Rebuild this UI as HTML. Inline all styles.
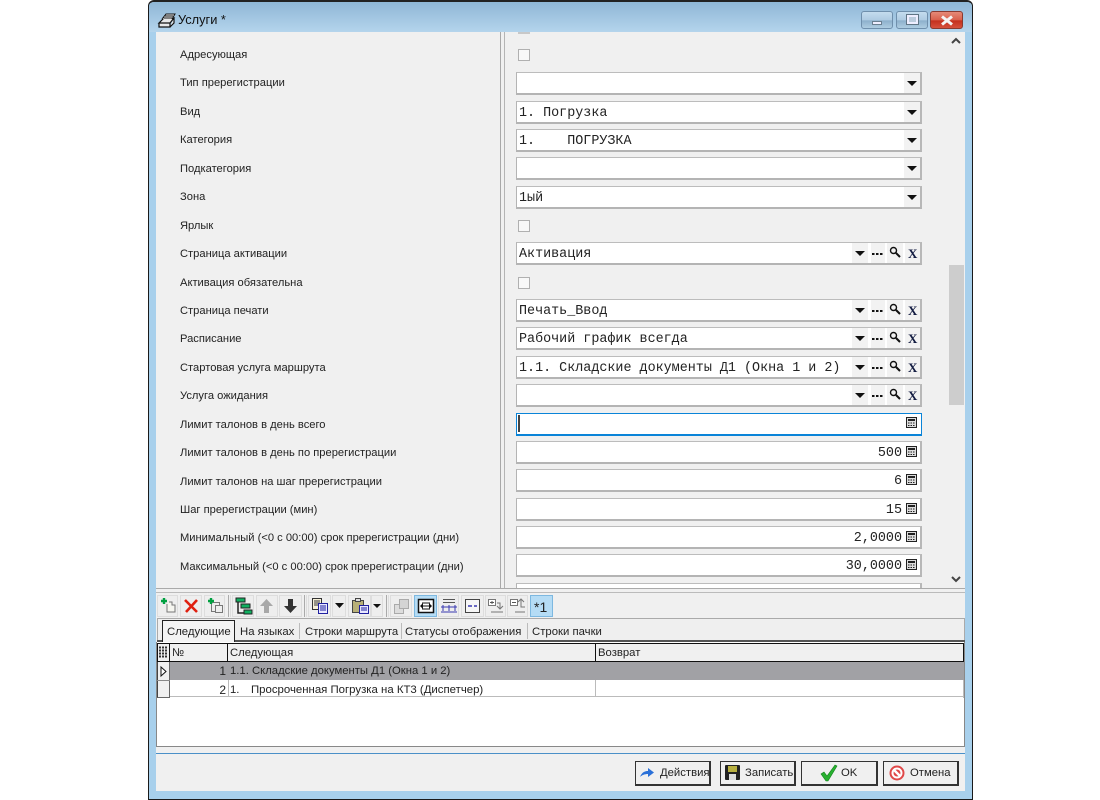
<!DOCTYPE html>
<html><head><meta charset="utf-8">
<style>
html,body{margin:0;padding:0;background:#fff;width:1100px;height:800px;overflow:hidden}
*{box-sizing:border-box}
body{font-family:"Liberation Sans",sans-serif;font-size:11.3px;color:#222;position:relative}
.a{position:absolute}
.l{position:absolute;left:180px;white-space:nowrap;line-height:14px;height:14px;font-size:11.16px;color:#222;margin-top:1px}
.f{position:absolute;left:516px;width:406px;height:23px;background:#fff;border:2px solid #b4b4b4;border-width:1px 2px 2px 1px;border-color:#bcbcbc #b8b8b8 #b4b4b4 #b4b4b4;font-family:"Liberation Mono",monospace;font-size:13.4px;line-height:23px;padding-left:2px;white-space:pre;color:#222}
.f.r{text-align:right;padding:0 18px 0 0}
.c{position:absolute;left:518px;width:12px;height:12px;background:#f8f8f8;border:1px solid #b0b0b0}
.dd{position:absolute;width:16px;height:20px;background:#f2f2f2;top:0}
.dd:after{content:"";position:absolute;left:3px;top:8px;border:5px solid transparent;border-top:5px solid #111;border-bottom:0}
.b{position:absolute;top:595px;height:22px;background:#eee;border:1px solid #ddd}
.on{background:#b5dcf5;border:1px solid #7db8e0}
.sep{position:absolute;top:595px;width:3px;height:22px;border-left:1px solid #aaa;border-right:1px solid #ddd}
.t{position:absolute;top:625px;line-height:14px;white-space:nowrap;font-size:11.35px;color:#222}
.ts{position:absolute;top:623px;width:1px;height:16px;background:#bbb}
.h{position:absolute;top:643px;height:19px;background:#f0f0f0;border:1px solid #111;border-left:0;line-height:18px;padding-left:2px;font-size:11.3px}
.btn{position:absolute;top:761px;height:25px;background:#f0f0f0;border:2px solid #333;border-width:1px 2px 2px 1px;font-size:11.3px;line-height:22px;white-space:nowrap}
.x1,.x2,.x3{position:absolute;height:20px;background:#f2f2f2}
.x1{left:871px;width:14px}.x2{left:887px;width:16px}.x3{left:905px;width:15px}
.xl{position:absolute;left:908px;font:bold 13px/14px "Liberation Serif",serif;color:#111a40}
svg{position:absolute;overflow:visible}
</style></head><body>
<!-- window frame -->
<div class="a" style="left:148px;top:0;width:825px;height:800px;background:#a8d0ec;border:1px solid #1a1a1a;border-top:2px solid #222;border-radius:6px 6px 0 0"></div>
<div class="a" style="left:149px;top:2px;width:823px;height:30px;background:linear-gradient(#8fb7d6,#b4d4ec);border-radius:5px 5px 0 0"></div>
<div class="a" style="left:156px;top:32px;width:809px;height:759px;background:#f0f0f0"></div>
<!-- title -->
<svg style="left:158px;top:11px" width="18" height="18" viewBox="0 0 18 18"><path d="M1 12 L6 7 L16 7 L12 12 Z M1 12 V16 H12 V12 M12 16 L16 12 V7" fill="#e8e8e8" stroke="#111" stroke-width="1.2"/><path d="M4 8 L8 3 L17 3 L14 8 M7 5 H15 M5.5 7 H14" fill="#eee" stroke="#111"/></svg>
<div class="a" style="left:178px;top:13px;font-size:12.8px;line-height:14px;color:#111">Услуги *</div>
<!-- caption buttons -->
<div class="a" style="left:861px;top:11px;width:32px;height:18px;border:1px solid #6f8fac;border-radius:3px;background:linear-gradient(#c4dcee 0,#aecbe2 50%,#8db0cc 55%,#aecde2)"><div class="a" style="left:10px;top:9px;width:10px;height:4px;background:#eef;border:1px solid #6a7f90"></div></div>
<div class="a" style="left:896px;top:11px;width:32px;height:18px;border:1px solid #6f8fac;border-radius:3px;background:linear-gradient(#c4dcee 0,#aecbe2 50%,#8db0cc 55%,#aecde2)"><div class="a" style="left:10px;top:3px;width:11px;height:9px;background:#bcd;border:2px solid #eef;outline:1px solid #607585"></div></div>
<div class="a" style="left:930px;top:11px;width:33px;height:18px;border:1px solid #8a3a30;border-radius:3px;background:linear-gradient(#e58a78 0,#d9604c 50%,#c4301e 55%,#d6503c)"><svg style="left:9px;top:3px" width="14" height="11" viewBox="0 0 14 11"><path d="M2 1.5 L12 9.5 M12 1.5 L2 9.5" stroke="#f4f4f4" stroke-width="3"/></svg></div>
<!-- splitter -->
<div class="a" style="left:500px;top:32px;width:1px;height:556px;background:#a8a8a8"></div>
<div class="a" style="left:504px;top:32px;width:1px;height:556px;background:#b4b4b4"></div>
<!-- scrollbar -->
<svg style="left:951px;top:37px" width="10" height="8" viewBox="0 0 10 8"><path d="M1 6 L5 2 L9 6" fill="none" stroke="#444" stroke-width="2"/></svg>
<div class="a" style="left:949px;top:265px;width:15px;height:140px;background:#cdcdcd"></div>
<svg style="left:951px;top:575px" width="10" height="8" viewBox="0 0 10 8"><path d="M1 2 L5 6 L9 2" fill="none" stroke="#444" stroke-width="2"/></svg>
<!-- labels -->
<div class="l" style="top:47px">Адресующая</div>
<div class="l" style="top:75px">Тип пререгистрации</div>
<div class="l" style="top:104px">Вид</div>
<div class="l" style="top:132px">Категория</div>
<div class="l" style="top:161px">Подкатегория</div>
<div class="l" style="top:189px">Зона</div>
<div class="l" style="top:218px">Ярлык</div>
<div class="l" style="top:246px">Страница активации</div>
<div class="l" style="top:275px">Активация обязательна</div>
<div class="l" style="top:303px">Страница печати</div>
<div class="l" style="top:331px">Расписание</div>
<div class="l" style="top:360px">Стартовая услуга маршрута</div>
<div class="l" style="top:388px">Услуга ожидания</div>
<div class="l" style="top:417px">Лимит талонов в день всего</div>
<div class="l" style="top:445px">Лимит талонов в день по пререгистрации</div>
<div class="l" style="top:474px">Лимит талонов на шаг пререгистрации</div>
<div class="l" style="top:502px">Шаг пререгистрации (мин)</div>
<div class="l" style="top:530px">Минимальный (&lt;0 с 00:00) срок пререгистрации (дни)</div>
<div class="l" style="top:559px">Максимальный (&lt;0 с 00:00) срок пререгистрации (дни)</div>
<!-- checks -->
<div class="a" style="left:518px;top:32px;width:12px;height:2px;background:#c8c8c8"></div>
<div class="c" style="top:49px"></div>
<div class="c" style="top:220px"></div>
<div class="c" style="top:277px"></div>
<!-- combo fields -->
<div class="f" style="top:72px"><span class="dd" style="right:0"></span></div>
<div class="f" style="top:101px">1. Погрузка<span class="dd" style="right:0"></span></div>
<div class="f" style="top:129px">1.    ПОГРУЗКА<span class="dd" style="right:0"></span></div>
<div class="f" style="top:157px"><span class="dd" style="right:0"></span></div>
<div class="f" style="top:186px">1ый<span class="dd" style="right:0"></span></div>
<!-- lookup fields -->
<div class="f" style="top:242px">Активация<span class="dd" style="right:52px"></span></div>
<div class="f" style="top:299px">Печать_Ввод<span class="dd" style="right:52px"></span></div>
<div class="f" style="top:327px">Рабочий график всегда<span class="dd" style="right:52px"></span></div>
<div class="f" style="top:356px">1.1. Складские документы Д1 (Окна 1 и 2)<span class="dd" style="right:52px"></span></div>
<div class="f" style="top:384px"><span class="dd" style="right:52px"></span></div>
<!-- lookup icons: dots, magnifier, X -->
<div class="x1" style="top:243px"></div><div class="x2" style="top:243px"></div><div class="x3" style="top:243px"></div>
<svg style="left:872px;top:253px" width="11" height="3"><path d="M0 1 H2.5 M4 1 H6.5 M8 1 H10.5" stroke="#111" stroke-width="2"/></svg>
<svg style="left:889px;top:246px" width="12" height="12" viewBox="0 0 12 12"><circle cx="4.5" cy="4.5" r="3" fill="none" stroke="#111" stroke-width="1.4"/><path d="M7 7 L11 11" stroke="#111" stroke-width="2"/></svg>
<div class="xl" style="top:247px">X</div>
<div class="x1" style="top:300px"></div><div class="x2" style="top:300px"></div><div class="x3" style="top:300px"></div>
<svg style="left:872px;top:310px" width="11" height="3"><path d="M0 1 H2.5 M4 1 H6.5 M8 1 H10.5" stroke="#111" stroke-width="2"/></svg>
<svg style="left:889px;top:303px" width="12" height="12" viewBox="0 0 12 12"><circle cx="4.5" cy="4.5" r="3" fill="none" stroke="#111" stroke-width="1.4"/><path d="M7 7 L11 11" stroke="#111" stroke-width="2"/></svg>
<div class="xl" style="top:304px">X</div>
<div class="x1" style="top:328px"></div><div class="x2" style="top:328px"></div><div class="x3" style="top:328px"></div>
<svg style="left:872px;top:338px" width="11" height="3"><path d="M0 1 H2.5 M4 1 H6.5 M8 1 H10.5" stroke="#111" stroke-width="2"/></svg>
<svg style="left:889px;top:331px" width="12" height="12" viewBox="0 0 12 12"><circle cx="4.5" cy="4.5" r="3" fill="none" stroke="#111" stroke-width="1.4"/><path d="M7 7 L11 11" stroke="#111" stroke-width="2"/></svg>
<div class="xl" style="top:332px">X</div>
<div class="x1" style="top:357px"></div><div class="x2" style="top:357px"></div><div class="x3" style="top:357px"></div>
<svg style="left:872px;top:367px" width="11" height="3"><path d="M0 1 H2.5 M4 1 H6.5 M8 1 H10.5" stroke="#111" stroke-width="2"/></svg>
<svg style="left:889px;top:360px" width="12" height="12" viewBox="0 0 12 12"><circle cx="4.5" cy="4.5" r="3" fill="none" stroke="#111" stroke-width="1.4"/><path d="M7 7 L11 11" stroke="#111" stroke-width="2"/></svg>
<div class="xl" style="top:361px">X</div>
<div class="x1" style="top:385px"></div><div class="x2" style="top:385px"></div><div class="x3" style="top:385px"></div>
<svg style="left:872px;top:395px" width="11" height="3"><path d="M0 1 H2.5 M4 1 H6.5 M8 1 H10.5" stroke="#111" stroke-width="2"/></svg>
<svg style="left:889px;top:388px" width="12" height="12" viewBox="0 0 12 12"><circle cx="4.5" cy="4.5" r="3" fill="none" stroke="#111" stroke-width="1.4"/><path d="M7 7 L11 11" stroke="#111" stroke-width="2"/></svg>
<div class="xl" style="top:389px">X</div>
<!-- numeric fields -->
<div class="f r" style="top:413px;border:1px solid #0a84d8;border-bottom-width:2px"></div>
<div class="a" style="left:518px;top:415px;width:2px;height:17px;background:#444"></div>
<div class="f r" style="top:441px">500</div>
<div class="f r" style="top:469px">6</div>
<div class="f r" style="top:498px">15</div>
<div class="f r" style="top:526px">2,0000</div>
<div class="f r" style="top:554px">30,0000</div>
<div class="f" style="top:583px;height:6px;border-bottom:0"></div>
<!-- calculators -->
<svg style="left:906px;top:417px" width="12" height="12" viewBox="0 0 12 12"><rect x=".5" y=".5" width="10" height="10" fill="#ddd" stroke="#222"/><path d="M2 3 H9" stroke="#222" stroke-width="2"/><path d="M2 6 H9 M2 8.5 H9" stroke="#222" stroke-dasharray="1.5 1"/></svg>
<svg style="left:906px;top:446px" width="12" height="12" viewBox="0 0 12 12"><rect x=".5" y=".5" width="10" height="10" fill="#ddd" stroke="#222"/><path d="M2 3 H9" stroke="#222" stroke-width="2"/><path d="M2 6 H9 M2 8.5 H9" stroke="#222" stroke-dasharray="1.5 1"/></svg>
<svg style="left:906px;top:474px" width="12" height="12" viewBox="0 0 12 12"><rect x=".5" y=".5" width="10" height="10" fill="#ddd" stroke="#222"/><path d="M2 3 H9" stroke="#222" stroke-width="2"/><path d="M2 6 H9 M2 8.5 H9" stroke="#222" stroke-dasharray="1.5 1"/></svg>
<svg style="left:906px;top:503px" width="12" height="12" viewBox="0 0 12 12"><rect x=".5" y=".5" width="10" height="10" fill="#ddd" stroke="#222"/><path d="M2 3 H9" stroke="#222" stroke-width="2"/><path d="M2 6 H9 M2 8.5 H9" stroke="#222" stroke-dasharray="1.5 1"/></svg>
<svg style="left:906px;top:531px" width="12" height="12" viewBox="0 0 12 12"><rect x=".5" y=".5" width="10" height="10" fill="#ddd" stroke="#222"/><path d="M2 3 H9" stroke="#222" stroke-width="2"/><path d="M2 6 H9 M2 8.5 H9" stroke="#222" stroke-dasharray="1.5 1"/></svg>
<svg style="left:906px;top:559px" width="12" height="12" viewBox="0 0 12 12"><rect x=".5" y=".5" width="10" height="10" fill="#ddd" stroke="#222"/><path d="M2 3 H9" stroke="#222" stroke-width="2"/><path d="M2 6 H9 M2 8.5 H9" stroke="#222" stroke-dasharray="1.5 1"/></svg>
<!-- horizontal splitter -->
<div class="a" style="left:156px;top:588px;width:809px;height:1px;background:#aaa"></div>
<div class="a" style="left:156px;top:592px;width:809px;height:1px;background:#bbb"></div>
<!-- toolbar -->
<div class="b" style="left:157px;width:21px"></div>
<div class="b" style="left:180px;width:22px"></div>
<div class="b" style="left:204px;width:21px"></div>
<div class="sep" style="left:228px"></div>
<div class="b" style="left:232px;width:22px"></div>
<div class="b" style="left:256px;width:22px"></div>
<div class="b" style="left:279px;width:23px"></div>
<div class="sep" style="left:304px"></div>
<div class="b" style="left:308px;width:23px"></div>
<div class="b" style="left:332px;width:14px"></div>
<div class="b" style="left:348px;width:23px"></div>
<div class="b" style="left:371px;width:12px"></div>
<div class="sep" style="left:386px"></div>
<div class="b" style="left:390px;width:22px"></div>
<div class="b on" style="left:414px;width:23px"></div>
<div class="b" style="left:438px;width:21px"></div>
<div class="b" style="left:461px;width:23px"></div>
<div class="b" style="left:485px;width:21px"></div>
<div class="b" style="left:507px;width:21px"></div>
<div class="b on" style="left:530px;width:23px"></div>
<!-- toolbar icons -->
<svg style="left:160px;top:597px" width="18" height="18" viewBox="0 0 18 18"><path d="M7 7 V15 H15 V8 H12 V5 H9" fill="#f6f6f0" stroke="#777"/><path d="M1 4 H7 M4 1 V7" stroke="#00a040" stroke-width="2.4"/></svg>
<svg style="left:183px;top:597px" width="17" height="18" viewBox="0 0 17 18"><path d="M2 3 L14 15 M14 3 L3 15" stroke="#e02010" stroke-width="2.6"/></svg>
<svg style="left:207px;top:597px" width="17" height="18" viewBox="0 0 17 18"><rect x="4.500" y="5.500" width="8" height="9" fill="#eee" stroke="#777"/><rect x="8.500" y="8.500" width="7" height="7" fill="#eee" stroke="#777"/><path d="M1 4 H7 M4 1 V7" stroke="#00a040" stroke-width="2.400"/></svg>
<svg style="left:235px;top:597px" width="18" height="18" viewBox="0 0 18 18"><path d="M3 3 V16 H14" fill="none" stroke="#222" stroke-width="1.500"/><rect x="1" y="1" width="9" height="4" fill="#10b060" stroke="#222"/><rect x="6" y="7" width="9" height="4" fill="#10b060" stroke="#222"/><rect x="9" y="13" width="8" height="4" fill="#10b060" stroke="#222"/></svg>
<svg style="left:258px;top:598px" width="17" height="16" viewBox="0 0 17 16"><path d="M8.500 1 L15 8 H11 V15 H6 V8 H2 Z" fill="#a8a8a8"/></svg>
<svg style="left:282px;top:598px" width="17" height="16" viewBox="0 0 17 16"><path d="M8.500 15 L15 8 H11 V1 H6 V8 H2 Z" fill="#333"/></svg>
<svg style="left:311px;top:597px" width="18" height="18" viewBox="0 0 18 18"><rect x="1.500" y="1.500" width="9" height="11" fill="#f6f0d8" stroke="#333"/><path d="M3 4 H9 M3 6 H9 M3 8 H9" stroke="#333"/><rect x="7.500" y="6.500" width="9" height="10" fill="#e8e8ff" stroke="#2020a0"/><path d="M9 9 H15 M9 11 H15 M9 13 H15" stroke="#2020a0"/></svg>
<svg style="left:335px;top:603px" width="9" height="6"><path d="M0 0 H9 L4.500 5 Z" fill="#111"/></svg>
<svg style="left:351px;top:597px" width="19" height="18" viewBox="0 0 19 18"><rect x="1.500" y="3.500" width="11" height="12" fill="#b8b078" stroke="#444"/><rect x="4.500" y="1.500" width="5" height="3" fill="#ddd" stroke="#444"/><rect x="8.500" y="8.500" width="9" height="8" fill="#e8e8ff" stroke="#2020a0"/><path d="M10 11 H16 M10 13 H16" stroke="#2020a0"/></svg>
<svg style="left:373px;top:604px" width="8" height="5"><path d="M0 0 H8 L4 4 Z" fill="#111"/></svg>
<svg style="left:393px;top:598px" width="17" height="17" viewBox="0 0 17 17"><rect x="1.500" y="6.500" width="9" height="9" fill="#ddd" stroke="#aaa"/><rect x="6.500" y="1.500" width="9" height="9" fill="#d4d4d4" stroke="#aaa"/></svg>
<svg style="left:417px;top:598px" width="18" height="16" viewBox="0 0 18 16"><rect x="1.500" y="1.500" width="15" height="13" fill="#fff" stroke="#111" stroke-width="1.500"/><path d="M5 5 H13 M5 8 H13 M5 11 H13" stroke="#111"/><path d="M3 8 L6 5 V11 Z M15 8 L12 5 V11 Z" fill="#111"/></svg>
<svg style="left:440px;top:598px" width="18" height="16" viewBox="0 0 18 16"><path d="M3 1.500 H15 M3 4.500 H15" stroke="#555"/><path d="M1 9 H17 M1 14 H17" stroke="#3838b0"/><path d="M3 7 V13 M9 7 V13 M15 7 V13" stroke="#3838b0"/></svg>
<svg style="left:464px;top:598px" width="17" height="16" viewBox="0 0 17 16"><rect x="1.500" y="1.500" width="14" height="13" fill="#f6f6f6" stroke="#444"/><path d="M4 8 H8 M10 8 H13" stroke="#3838b0" stroke-width="1.500"/></svg>
<svg style="left:487px;top:598px" width="18" height="16" viewBox="0 0 18 16"><rect x="1.500" y="1.500" width="7" height="6" fill="#fff" stroke="#777"/><path d="M3 4.500 H7 M5 3 V6" stroke="#555"/><path d="M10 5 H13 V11 M10 8 L13 11 L16 8 M4 14 H16" fill="none" stroke="#777"/></svg>
<svg style="left:509px;top:598px" width="18" height="16" viewBox="0 0 18 16"><rect x="1.500" y="1.500" width="7" height="6" fill="#fff" stroke="#777"/><path d="M3 4.500 H7" stroke="#555"/><path d="M9 4 L12 1 L15 4 M12 1 V9 H16 M6 14 H16" fill="none" stroke="#777"/></svg>
<div class="a" style="left:534px;top:599px;font-size:14px;line-height:16px;color:#222">*1</div>
<!-- tabs -->
<div class="a" style="left:157px;top:618px;width:808px;height:23px;border:1px solid #aaa;border-bottom:0;background:#efefef"></div>
<div class="a" style="left:157px;top:640px;width:808px;height:2px;background:#555"></div>
<div class="a" style="left:162px;top:620px;width:73px;height:22px;background:#f4f4f4;border:1px solid #222;border-bottom:0"></div>
<div class="t" style="left:167px">Следующие</div>
<div class="t" style="left:240px">На языках</div>
<div class="ts" style="left:299px"></div>
<div class="t" style="left:305px">Строки маршрута</div>
<div class="ts" style="left:401px"></div>
<div class="t" style="left:405px">Статусы отображения</div>
<div class="ts" style="left:527px"></div>
<div class="t" style="left:532px">Строки пачки</div>
<!-- grid -->
<div class="a" style="left:156px;top:642px;width:809px;height:105px;background:#fff;border:1px solid #888;border-top:0"></div>
<div class="h" style="left:157px;width:13px;border-left:1px solid #111"></div>
<svg style="left:159px;top:646px" width="8" height="12"><path d="M0 1.500 H8 M0 4.500 H8 M0 7.500 H8 M0 10.500 H8" stroke="#333" stroke-dasharray="2 1" stroke-width="2"/></svg>
<div class="h" style="left:170px;width:58px">№</div>
<div class="h" style="left:228px;width:368px">Следующая</div>
<div class="h" style="left:596px;width:368px">Возврат</div>
<div class="a" style="left:157px;top:662px;width:13px;height:36px;background:#f0f0f0;border-right:1px solid #666;border-left:1px solid #444;border-bottom:1px solid #666"></div>
<div class="a" style="left:157px;top:680px;width:13px;height:1px;background:#888"></div>
<svg style="left:160px;top:666px" width="7" height="11"><path d="M1 1 L6 5.500 L1 10 Z" fill="#fff" stroke="#111"/></svg>
<div class="a" style="left:170px;top:662px;width:794px;height:18px;background:#a1a1a5"></div>
<div class="a" style="left:170px;top:680px;width:793px;height:17px;background:#fff;border-bottom:1px solid #bbb"></div>
<div class="a" style="left:228px;top:680px;width:1px;height:17px;background:#bbb"></div>
<div class="a" style="left:595px;top:680px;width:1px;height:17px;background:#bbb"></div>
<div class="a" style="left:963px;top:680px;width:1px;height:18px;background:#bbb"></div>
<div class="a" style="left:170px;top:664px;width:56px;text-align:right;line-height:14px;font-size:12px">1</div>
<div class="a" style="left:230px;top:664px;line-height:14px;white-space:pre;font-size:11.3px">1.1. Складские документы Д1 (Окна 1 и 2)</div>
<div class="a" style="left:170px;top:683px;width:56px;text-align:right;line-height:14px;font-size:12px">2</div>
<div class="a" style="left:230px;top:683px;line-height:14px;white-space:pre">1.</div>
<div class="a" style="left:251px;top:683px;line-height:14px;white-space:pre;font-size:11.4px">Просроченная Погрузка на КТ3 (Диспетчер)</div>
<!-- bottom -->
<div class="a" style="left:156px;top:753px;width:809px;height:1px;background:#4a90c8"></div>
<div class="btn" style="left:635px;width:76px;padding-left:24px">Действия</div>
<svg style="left:639px;top:767px" width="16" height="12" viewBox="0 0 16 12"><path d="M1 10 C3 5 6 4 9 4 V1 L15 5.500 L9 10 V7 C6 7 3 8 1 10 Z" fill="#2a70d8"/></svg>
<div class="btn" style="left:720px;width:76px;padding-left:24px">Записать</div>
<svg style="left:725px;top:765px" width="15" height="15" viewBox="0 0 15 15"><rect x="0" y="0" width="15" height="15" rx="1" fill="#222"/><rect x="3" y="1" width="9" height="6" fill="#b8b040"/><rect x="4" y="9" width="7" height="6" fill="#ddd"/></svg>
<div class="btn" style="left:801px;width:77px;padding-left:39px">OK</div>
<svg style="left:820px;top:764px" width="18" height="18" viewBox="0 0 18 18"><path d="M1 10 L4 8 L7 12 L15 1 L17 2 L8 17 H6 Z" fill="#28b030" stroke="#108018" stroke-width=".6"/></svg>
<div class="btn" style="left:883px;width:76px;padding-left:26px">Отмена</div>
<svg style="left:889px;top:765px" width="16" height="16" viewBox="0 0 16 16"><circle cx="8" cy="8" r="7.500" fill="#e04848"/><circle cx="8" cy="8" r="4.500" fill="none" stroke="#fff" stroke-width="2"/><path d="M4.500 4.500 L11.500 11.500" stroke="#fff" stroke-width="2.500"/></svg>
</body></html>
